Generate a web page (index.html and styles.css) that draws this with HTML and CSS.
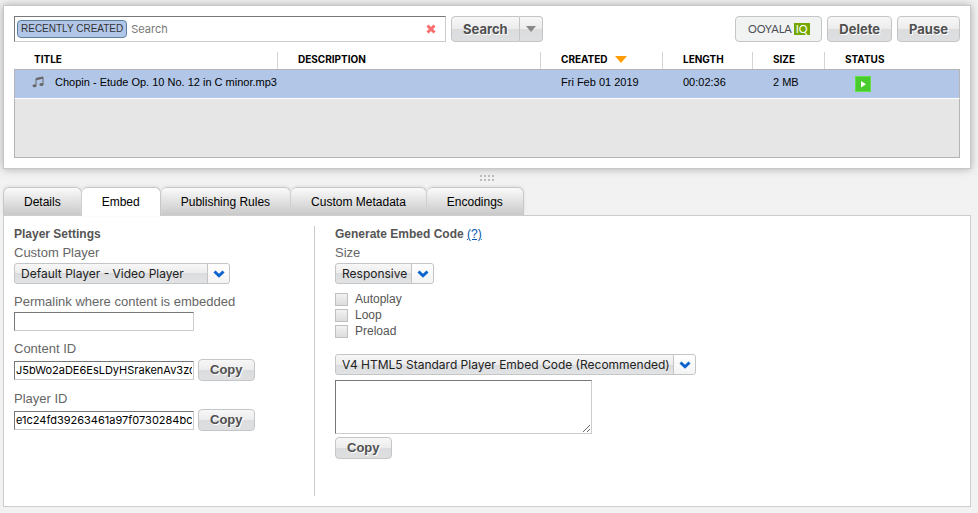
FILE: index.html
```html
<!DOCTYPE html>
<html lang="en">
<head>
<meta charset="utf-8">
<title>Backlot - Manage</title>
<link rel="stylesheet" href="styles.css">
</head>
<body>
<svg class="defs" aria-hidden="true">
  <symbol id="chevron" viewBox="0 0 12 8"><path d="M1.500 1.500L6 5.800l4.500-4.300" fill="none" stroke="#0b63ce" stroke-width="3"/></symbol>
</svg>
<main>
  <section class="library">
    <div class="toolbar">
      <div class="search">
        <span class="tag">RECENTLY CREATED</span>
        <input type="text" placeholder="Search" aria-label="Search">
        <button class="clear" type="button" aria-label="Clear search">
          <svg width="10" height="10" viewBox="0 0 10 10"><path d="M1.500 1.500l7 7M8.500 1.500l-7 7" stroke="#fa6e6e" stroke-width="3"/></svg>
        </button>
      </div>
      <div class="split">
        <button class="btn" type="button">Search</button>
        <button class="btn more" type="button" aria-label="Search options">
          <svg width="10" height="6" viewBox="0 0 10 6"><path d="M0 0h10L5 6z" fill="#888"/></svg>
        </button>
      </div>
      <div class="actions">
        <button class="btn iq" type="button"><span>OOYALA</span><b>IQ</b></button>
        <button class="btn" type="button">Delete</button>
        <button class="btn" type="button">Pause</button>
      </div>
    </div>
    <table>
      <colgroup><col class="c-title"><col class="c-desc"><col class="c-created"><col class="c-length"><col class="c-size"><col></colgroup>
      <thead>
        <tr>
          <th>TITLE</th>
          <th>DESCRIPTION</th>
          <th>CREATED <svg class="sort" width="12" height="7" viewBox="0 0 12 7"><path d="M0 0h12L6 7z" fill="#ff9c00"/></svg></th>
          <th>LENGTH</th>
          <th>SIZE</th>
          <th>STATUS</th>
        </tr>
      </thead>
      <tbody>
        <tr>
          <td class="name"><svg width="12" height="12" viewBox="0 0 12 12"><path d="M4 9.500V2.500l7-1.500v7.500" fill="none" stroke="#666" stroke-width="1"/><path d="M4 2.300l7-1.500v2L4 4.300z" fill="#666"/><ellipse cx="2.500" cy="9.700" rx="2" ry="1.500" fill="#666"/><ellipse cx="9.400" cy="8.600" rx="2" ry="1.500" fill="#666"/></svg>Chopin - Etude Op. 10 No. 12 in C minor.mp3</td>
          <td></td>
          <td>Fri Feb 01 2019</td>
          <td>00:02:36</td>
          <td>2 MB</td>
          <td class="status"><svg width="16" height="16" viewBox="0 0 16 16" role="img" aria-label="Live"><path d="M0 0h16v16H0z" fill="#63e04a"/><path d="M1 1h14v14H1z" fill="#4acb2d"/><path d="M6 5v6.500l5-3.200z" fill="#fff"/></svg></td>
        </tr>
      </tbody>
    </table>
    <div class="empty"></div>
  </section>

  <div class="grip"><svg width="14" height="6" viewBox="0 0 14 6"><path d="M0 0h2v2H0zM4 0h2v2H4zM8 0h2v2H8zM12 0h2v2h-2zM0 4h2v2H0zM4 4h2v2H4zM8 4h2v2H8zM12 4h2v2h-2z" fill="#bbb"/></svg></div>

  <nav class="tabs">
    <button type="button">Details</button>
    <button type="button" class="active">Embed</button>
    <button type="button">Publishing Rules</button>
    <button type="button">Custom Metadata</button>
    <button type="button">Encodings</button>
  </nav>

  <section class="embed">
    <div class="settings">
      <h2>Player Settings</h2>
      <div class="field">
        <label for="player">Custom Player</label>
        <div class="select player"><select id="player"><option>Default Player - Video Player</option></select><svg width="12" height="8"><use href="#chevron"/></svg></div>
      </div>
      <div class="field">
        <label for="permalink">Permalink where content is embedded</label>
        <input id="permalink" type="text">
      </div>
      <div class="field">
        <label for="content-id">Content ID</label>
        <div class="row"><input id="content-id" type="text" value="J5bWo2aDE6EsLDyHSrakenAv3zcX"><button class="btn copy" type="button">Copy</button></div>
      </div>
      <div class="field">
        <label for="player-id">Player ID</label>
        <div class="row"><input id="player-id" type="text" value="e1c24fd39263461a97f0730284bc2a"><button class="btn copy" type="button">Copy</button></div>
      </div>
    </div>
    <div class="generate">
      <h2>Generate Embed Code <a href="#help">(?)</a></h2>
      <div class="field">
        <label for="size">Size</label>
        <div class="select size"><select id="size"><option>Responsive</option></select><svg width="12" height="8"><use href="#chevron"/></svg></div>
      </div>
      <div class="checks">
        <label><input type="checkbox">Autoplay</label>
        <label><input type="checkbox">Loop</label>
        <label><input type="checkbox">Preload</label>
      </div>
      <div class="select version"><select aria-label="Embed code version"><option>V4 HTML5 Standard Player Embed Code (Recommended)</option></select><svg width="12" height="8"><use href="#chevron"/></svg></div>
      <textarea aria-label="Embed code"></textarea>
      <button class="btn copy" type="button">Copy</button>
    </div>
  </section>
</main>
</body>
</html>
```
FILE: styles.css
```css
* { box-sizing: border-box; }
body {
  margin: 0;
  padding: 5px 7px 6px 3px;
  background: #f2f2f2;
  color: #000;
  font: 11px/16px Inter, "Liberation Sans", sans-serif;
}
button, input, select, textarea { font: inherit; margin: 0; }
svg { display: block; }
.defs { display: none; }

.library {
  padding: 10px;
  background: #fff;
  border: 1px solid #c8c8c8;
  box-shadow: 0 0 8px #aaa;
}
.toolbar { display: flex; gap: 5px; }
.search {
  display: flex;
  align-items: center;
  flex: 0 1 432px;
  height: 26px;
  padding: 0 9px 0 2px;
  border: 1px solid #ccc;
  border-top-color: #777;
  border-left-color: #777;
}
.tag {
  height: 18px;
  padding: 0 3px;
  border: 1px solid #5f7f9f;
  border-radius: 4px;
  background: #b2c7e8;
  color: #333;
  font-family: "Liberation Sans", sans-serif;
  font-size: 10px;
  white-space: nowrap;
}
.search input {
  flex: 1;
  min-width: 0;
  padding: 0 4px;
  border: 0;
  outline: 0;
  background: none;
}
.search input::placeholder { color: #777; }
.clear { padding: 0; border: 0; background: none; }

.btn {
  height: 26px;
  padding: 0 11px;
  border: 1px solid #c4c5c7;
  border-radius: 4px;
  background: linear-gradient(#f7f7f7, #ececed 50%, #dbdcde 50%, #dedfe1);
  color: #505050;
  font-size: 13px;
  font-weight: 700;
  text-shadow: 1px 1px 0 #fff;
}
.btn.copy { height: 22px; line-height: 20px; }
.split { display: flex; }
.split .btn { border-radius: 4px 0 0 4px; }
.split .more {
  width: 23px;
  padding: 0 6px;
  border-left: 0;
  border-radius: 0 4px 4px 0;
}
.actions { display: flex; gap: 5px; margin-left: auto; }
.btn.iq {
  display: flex;
  align-items: center;
  justify-content: center;
  gap: 2px;
  width: 87px;
  padding: 0;
  background: #f1f2f2;
  color: #4a4f55;
  font: 11px/12px Lato, sans-serif;
  text-shadow: none;
}
.iq b { padding: 0 2px; background: #74a800; color: #fff; font-weight: 400; }

table { width: 100%; table-layout: fixed; border-spacing: 0; }
.c-title { width: 264px; }
.c-desc { width: 263px; }
.c-created { width: 122px; }
.c-length { width: 90px; }
.c-size { width: 72px; }
th {
  height: 28px;
  padding: 6px 0 0 20px;
  border-bottom: 1px solid #b4b4b4;
  background: linear-gradient(#d4d4d4, #d4d4d4) right bottom / 1px 17px no-repeat;
  font-size: 10px;
  text-align: left;
}
th:last-child { background: none; }
.sort { display: inline-block; margin-left: 5px; }
td {
  height: 29px;
  padding: 0 0 4px 20px;
  border-bottom: 1px solid #fff;
  background: #b2c7e8;
  font-family: "Liberation Sans", sans-serif;
  overflow: hidden;
  white-space: nowrap;
}
td:first-child { border-left: 1px solid #b4b4b4; }
td:last-child { border-right: 1px solid #b4b4b4; }
td.name { padding-left: 17px; }
.name svg { display: inline-block; margin-right: 11px; vertical-align: -2px; }
td.status { padding: 0 0 0 30px; }
.empty { height: 59px; border: 1px solid #b4b4b4; border-top: 0; background: #e6e6e6; }

.grip { display: flex; justify-content: center; height: 18px; padding-top: 6px; }

.tabs { display: flex; font: 12px/16px "Liberation Sans", sans-serif; }
.tabs button {
  height: 28px;
  padding: 0 20px;
  border: 1px solid #c8c8c8;
  border-width: 1px 1px 0 0;
  border-radius: 6px 6px 0 0;
  background: linear-gradient(#fafafa, #c9c9c9);
  box-shadow: 0 -1px 3px #ddd;
}
.tabs button:first-child { border-left-width: 1px; }
.tabs .active { background: #fff; z-index: 1; margin-bottom: -1px; height: 29px; }

.embed {
  display: flex;
  padding: 10px;
  border: 1px solid #ccc;
  background: #fff;
  color: #666;
  font: 13px/20px "Liberation Sans", sans-serif;
}
.settings { flex: 0 0 301px; border-right: 1px solid #ccc; }
.generate { flex: 1; min-height: 270px; padding-left: 20px; }
h2 { margin: 0; color: #555; font-size: 12px; line-height: 17px; }
h2 a { color: #0b57ad; font-weight: 400; }
.field { margin-bottom: 8px; }
.field > label { display: block; }
.row { display: flex; align-items: center; gap: 4px; }
.field input {
  display: block;
  width: 180px;
  height: 19px;
  padding: 0 1px;
  border: 1px solid #ccc;
  border-top-color: #777;
  border-left-color: #777;
  background: #fff;
  color: #000;
  font: 11px/16px Inter, sans-serif;
}
.select { position: relative; width: max-content; }
.select select {
  display: block;
  appearance: none;
  width: 100%;
  height: 21px;
  padding: 0 23px 0 6px;
  border: 1px solid #c4c5c7;
  border-radius: 3px;
  background:
    linear-gradient(#c4c5c7, #c4c5c7) right 21px top / 1px 100% no-repeat,
    linear-gradient(#fff, #f4f4f4) right top / 21px 100% no-repeat,
    linear-gradient(#f7f7f7, #ececed 50%, #dbdcde 50%, #e2e3e5);
  color: #222;
  font: 12px/18px Inter, sans-serif;
}
.select svg { position: absolute; top: 7px; right: 5px; pointer-events: none; }
.player { width: 216px; }
.size { width: 99px; }
.version { width: 361px; }
.generate .field { margin-bottom: 7px; }
.checks { margin-bottom: 15px; font-size: 12px; line-height: 16px; color: #555; }
.checks label { display: flex; align-items: center; gap: 7px; width: max-content; }
.checks input {
  appearance: none;
  width: 13px;
  height: 13px;
  border: 1px solid #c0c0c0;
  background: linear-gradient(#f2f2f2, #dcdcde);
}
textarea {
  display: block;
  width: 257px;
  height: 54px;
  margin: 5px 0 3px;
  border: 1px solid #ccc;
  border-top-color: #777;
  border-left-color: #777;
}
.generate .copy { display: block; }
```
